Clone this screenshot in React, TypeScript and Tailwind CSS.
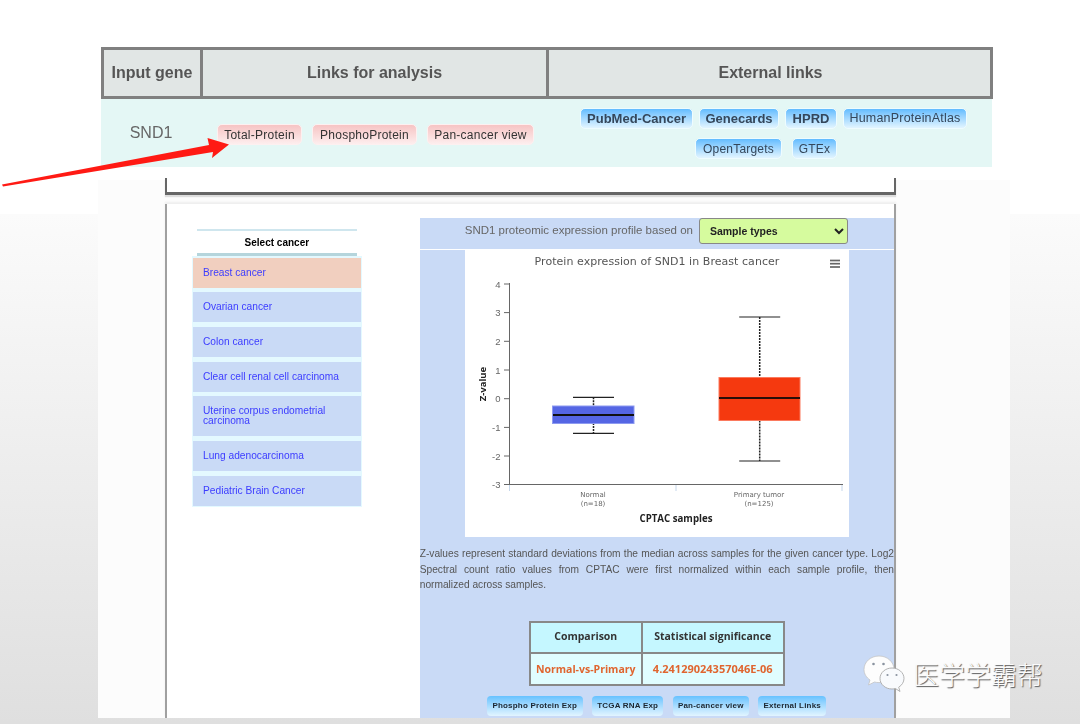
const cancers = [
  { name: "Breast cancer", h: "h-[30px]", active: true },
  { name: "Ovarian cancer", h: "h-[30px]" },
  { name: "Colon cancer", h: "h-[30px]" },
  { name: "Clear cell renal cell carcinoma", h: "h-[30px]" },
  { name: "Uterine corpus endometrial carcinoma", h: "h-[40px]" },
  { name: "Lung adenocarcinoma", h: "h-[30px]" },
  { name: "Pediatric Brain Cancer", h: "h-[30px]" },
];

const yTicks = [
  { label: "4", y: 34 },
  { label: "3", y: 62.6 },
  { label: "2", y: 91.3 },
  { label: "1", y: 120 },
  { label: "0", y: 148.7 },
  { label: "-1", y: 177.4 },
  { label: "-2", y: 206 },
  { label: "-3", y: 234.5 },
];

function PinkButton({ label, className }: { label: string; className: string }) {
  return (
    <span
      className={`flex h-[21px] items-center justify-center rounded-[5px] border border-[#fdf0f0] bg-gradient-to-b from-[#f6c4c4] to-[#fdeeee] text-[12px] tracking-[0.25px] text-[#333] ${className}`}
    >
      {label}
    </span>
  );
}

function BlueButton({ label, className }: { label: string; className: string }) {
  return (
    <span
      className={`flex items-center justify-center rounded-[5px] border border-[#eefcff] bg-gradient-to-b from-[#62bcff] to-[#e2f5ff] text-[#34465a] ${className}`}
    >
      {label}
    </span>
  );
}

function SmallButton({ label, className }: { label: string; className: string }) {
  return (
    <span
      className={`flex h-[20px] items-center justify-center rounded-[4px] bg-gradient-to-b from-[#66c2ff] to-[#e2f5ff] text-[8px] font-bold tracking-[0.2px] text-[#1c2630] ${className}`}
    >
      {label}
    </span>
  );
}

function Whisker({ cx, top, bottom, boxTop, boxBottom }: { cx: number; top: number; bottom: number; boxTop: number; boxBottom: number }) {
  return (
    <g stroke="#222" fill="none">
      <line x1={cx - 20.5} x2={cx + 20.5} y1={top} y2={top} strokeWidth="1.2" />
      <line x1={cx - 20.5} x2={cx + 20.5} y1={bottom} y2={bottom} strokeWidth="1.2" />
      <line x1={cx} x2={cx} y1={top} y2={boxTop} strokeWidth="1.5" strokeDasharray="2 1" />
      <line x1={cx} x2={cx} y1={boxBottom} y2={bottom} strokeWidth="1.5" strokeDasharray="2 1" />
    </g>
  );
}

function BoxChart() {
  return (
    <svg viewBox="0 0 384 287" className="block h-[287px] w-[384px] bg-white">
      <text x="192" y="14.5" textAnchor="middle" fontFamily="DejaVu Sans" fontSize="11" letterSpacing="0.05" fill="#555">
        Protein expression of SND1 in Breast cancer
      </text>
      <g stroke="#666" strokeWidth="1.7">
        <line x1="365" x2="375" y1="10.5" y2="10.5" />
        <line x1="365" x2="375" y1="13.7" y2="13.7" />
        <line x1="365" x2="375" y1="17" y2="17" />
      </g>
      <g stroke="#666" fill="none">
        <line x1="44.5" x2="44.5" y1="33" y2="235" />
        <line x1="44.5" x2="378" y1="234.5" y2="234.5" />
      </g>
      {yTicks.map((t) => (
        <g key={t.label}>
          <line x1="39" x2="44" y1={t.y} y2={t.y} stroke="#666" />
          <text x="35.5" y={t.y + 3.5} textAnchor="end" fontFamily="Liberation Sans" fontSize="9.5" fill="#666">
            {t.label}
          </text>
        </g>
      ))}
      <g stroke="#c5d6ea">
        <line x1="44.5" x2="44.5" y1="235" y2="241" />
        <line x1="211" x2="211" y1="235" y2="241" />
        <line x1="377" x2="377" y1="235" y2="241" />
      </g>
      <Whisker cx={128.5} top={147.3} bottom={183.3} boxTop={156} boxBottom={173} />
      <rect x="87.5" y="156" width="81.5" height="17.5" fill="#5566e4" stroke="#8d9af0" />
      <line x1="88" x2="169" y1="165" y2="165" stroke="#111" strokeWidth="2" />
      <Whisker cx={294.7} top={67} bottom={211} boxTop={127.5} boxBottom={170.5} />
      <rect x="254" y="127.5" width="81" height="43" fill="#f5390f" stroke="#fb7a5e" />
      <line x1="254" x2="335" y1="148" y2="148" stroke="#2a0e08" strokeWidth="2" />
      <g fontFamily="DejaVu Sans" fontSize="7" fill="#666" textAnchor="middle">
        <text x="128" y="247">Normal</text>
        <text x="128" y="256">(n=18)</text>
        <text x="294" y="247">Primary tumor</text>
        <text x="294" y="256">(n=125)</text>
      </g>
      <text x="211" y="272" textAnchor="middle" fontFamily="Open Sans" fontWeight="700" fontSize="9.7" fill="#222">
        CPTAC samples
      </text>
      <text
        x="0"
        y="0"
        transform="translate(21 134) rotate(-90)"
        textAnchor="middle"
        fontFamily="Open Sans"
        fontWeight="700"
        fontSize="9.5"
        fill="#222"
      >
        Z-value
      </text>
    </svg>
  );
}

function Watermark() {
  return (
    <div className="absolute left-[863px] top-[655px] flex items-center gap-[8px]">
      <svg viewBox="0 0 42 38" className="h-[38px] w-[42px]">
        <path
          d="M16 1C7.5 1 1 7 1 14.5c0 4.5 2.5 8 6 10.5L5.5 30l6-3c1.5.4 3 .6 4.5.6 8.5 0 15-5.6 15-13.1S24.5 1 16 1Z"
          fill="#fdfdfd"
          stroke="#c4c4c4"
          strokeWidth="0.8"
        />
        <path
          d="M29 13c-6.6 0-12 4.6-12 10.5S22.4 34 29 34c1.2 0 2.3-.2 3.4-.5L37 36.500l-1.300-4.300c3.200-2 5.300-5.100 5.300-8.700C41 17.600 35.600 13 29 13Z"
          fill="#f8fafd"
          stroke="#aaa"
          strokeWidth="0.9"
        />
        <circle cx="10.5" cy="9" r="1.3" fill="#8a93a0" />
        <circle cx="20.5" cy="9" r="1.3" fill="#8a93a0" />
        <circle cx="24.5" cy="20" r="1.1" fill="#8a93a0" />
        <circle cx="33.5" cy="20" r="1.1" fill="#8a93a0" />
      </svg>
      <span className="font-['Noto_Sans_CJK_SC',sans-serif] text-[26px] font-light leading-none text-[#fbfbfb] [text-shadow:1px_1px_1px_#555]">
        医学学霸帮
      </span>
    </div>
  );
}

export default function App() {
  return (
    <div className="relative h-[724px] w-[1080px] overflow-hidden bg-[linear-gradient(to_bottom,#ffffff_0,#ffffff_214px,#fbfbfb_214px,#dfdfdf_100%)] font-['Liberation_Sans',Arial,sans-serif]">
      <div className="blur-[0.35px]">
        <div className="ml-[98px] h-[718px] w-[912px] bg-[linear-gradient(to_bottom,#ffffff_180px,#fcfcfc_180px)] pl-[3px] pt-[47px]">
          {/* gene table */}
          <div className="w-[892px]">
            <div className="grid h-[52px] grid-cols-[99px_346px_447px] border-[3px] border-[#808080] bg-[#e1e6e5] font-bold text-[#555]">
              <div className="flex items-center justify-center border-r-[3px] border-[#808080] text-[16px]">Input gene</div>
              <div className="flex items-center justify-center border-r-[3px] border-[#808080] text-[16px]">Links for analysis</div>
              <div className="flex items-center justify-center pr-[4px] text-[16px]">External links</div>
            </div>
            <div className="grid h-[68px] w-[891px] grid-cols-[100px_346px_445px] bg-[#e4f7f5]">
              <div className="flex items-center justify-center text-[16px] text-[#666]">SND1</div>
              <div className="flex gap-[10px] pl-[16px] pt-[25px]">
                <PinkButton label="Total-Protein" className="w-[85px]" />
                <PinkButton label="PhosphoProtein" className="w-[105px]" />
                <PinkButton label="Pan-cancer view" className="w-[107px]" />
              </div>
              <div className="flex flex-col gap-[9px] pt-[9px]">
                <div className="ml-[33px] flex h-[21px] gap-[6px]">
                  <BlueButton label="PubMed-Cancer" className="w-[113px] text-[13px] font-bold" />
                  <BlueButton label="Genecards" className="w-[80px] text-[13px] font-bold" />
                  <BlueButton label="HPRD" className="w-[52px] text-[13px] font-bold" />
                  <BlueButton label="HumanProteinAtlas" className="w-[124px] text-[12.5px] tracking-[0.2px]" />
                </div>
                <div className="ml-[148px] flex h-[21px] gap-[10px]">
                  <BlueButton label="OpenTargets" className="w-[87px] text-[12px] tracking-[0.2px]" />
                  <BlueButton label="GTEx" className="w-[45px] text-[12px] tracking-[0.2px]" />
                </div>
              </div>
            </div>
          </div>

          {/* closing edge of the box above */}
          <div className="ml-[64px] mt-[11px] h-[17px] w-[731px] border-x-2 border-b-[3px] border-[#666] bg-white shadow-[0_2px_1px_#ddd]" />

          {/* cancer panel */}
          <div className="ml-[64px] mt-[9px] flex h-[514px] w-[731px] overflow-hidden border-x-2 border-[#a0a0a0] bg-white shadow-[0_-2px_2px_#eee]">
            <div className="ml-[24.5px] mt-[25px] w-[171px]">
              <div className="mx-[5px] flex h-[27px] items-center justify-center border-b-[3px] border-t-2 border-b-[#b5d5dc] border-t-[#cfe6ee] text-[10px] font-bold text-black">
                Select cancer
              </div>
              <div className="flex flex-col gap-[4.7px] bg-[#e4f9ff] p-[1.5px]">
                {cancers.map((c) => (
                  <div
                    key={c.name}
                    className={`flex items-center pl-[10px] pr-[12px] text-[10.2px] leading-[10px] text-[#3c3cff] ${c.h} ${
                      c.active ? "bg-[#f1cfbf]" : "bg-[#c9daf6]"
                    }`}
                  >
                    {c.name}
                  </div>
                ))}
              </div>
            </div>

            <div className="ml-[57.5px] mt-[14px] flex w-[475px] flex-col bg-[#c9daf6]">
              <div className="flex h-[32px] items-start border-b border-white pl-[45px]">
                <span className="pt-[5px] text-[11.5px] leading-[14px] text-[#666]">SND1 proteomic expression profile based on</span>
                <select
                  defaultValue="Sample types"
                  className="ml-[6px] h-[26px] w-[149px] rounded-[3px] border border-[#888] bg-[#d6fb9e] pl-[6px] text-[10.5px] font-bold text-[#222]"
                >
                  <option>Sample types</option>
                </select>
              </div>
              <div className="ml-[45px]">
                <BoxChart />
              </div>
              <p className="mt-[9px] text-justify text-[10.2px] leading-[15.5px] text-[#555]">
                Z-values represent standard deviations from the median across samples for the given cancer type. Log2 Spectral count ratio values from CPTAC were first normalized within each sample profile, then normalized across samples.
              </p>
              <table className="ml-[109px] mt-[28px] h-[65px] w-[256px] border-collapse border-2 border-[#888] font-['Open_Sans',sans-serif] text-[10.5px] font-bold">
                <tbody>
                  <tr className="h-[31px] bg-[#c5f7ff] text-[#333]">
                    <td className="w-[112px] border-2 border-[#888] text-center">Comparison</td>
                    <td className="border-2 border-[#888] text-center">Statistical significance</td>
                  </tr>
                  <tr className="bg-[#e0fdff] text-[#e0652f]">
                    <td className="border-2 border-[#888] pt-[2px] text-center">Normal-vs-Primary</td>
                    <td className="border-2 border-[#888] pt-[2px] text-center text-[11px]">4.24129024357046E-06</td>
                  </tr>
                </tbody>
              </table>
              <div className="ml-[67px] mt-[10px] flex gap-[9.5px]">
                <SmallButton label="Phospho Protein Exp" className="w-[96px]" />
                <SmallButton label="TCGA RNA Exp" className="w-[71px]" />
                <SmallButton label="Pan-cancer view" className="w-[76px]" />
                <SmallButton label="External Links" className="w-[68px]" />
              </div>
            </div>
          </div>
        </div>
      </div>

      {/* red annotation arrow */}
      <svg viewBox="0 0 240 195" className="absolute left-0 top-0 h-[195px] w-[240px]">
        <polygon points="2,184.5 209,145 207.5,138 229,144.5 212,158 213,152 3,186.5" fill="#ff1a14" />
      </svg>
      <Watermark />
    </div>
  );
}
